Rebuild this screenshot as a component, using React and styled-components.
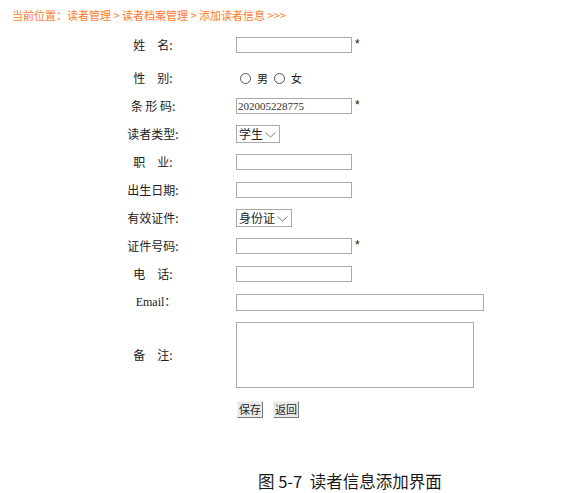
import React from "react";
import styled, { createGlobalStyle } from "styled-components";

const GlobalStyle = createGlobalStyle`
  html, body {
    margin: 0;
    padding: 0;
    background: #fff;
  }
  body {
    font-family: "Noto Sans CJK SC", "Noto Sans", sans-serif;
    color: #222;
  }
`;

const Chevron = () => (
  <svg width="11" height="6" viewBox="0 0 11 6">
    <polyline points="0.5,0.5 5.5,5 10.5,0.5" fill="none" stroke="#777" strokeWidth="1" />
  </svg>
);

const App = () => {
  return (
    <S.Page>
      <GlobalStyle />
      <S.Breadcrumb>当前位置：读者管理 &gt; 读者档案管理 &gt; 添加读者信息 &gt;&gt;&gt;</S.Breadcrumb>
      <S.Form>
        <S.Row $h={28}>
          <S.Label>姓　名:</S.Label>
          <S.Field>
            <S.TextInput $w={116} />
            <S.Star>*</S.Star>
          </S.Field>
        </S.Row>
        <S.Row $h={28} $gap={5}>
          <S.Label>性　别:</S.Label>
          <S.Field>
            <S.Radios>
              <S.Radio />
              <S.RadioText>男</S.RadioText>
              <S.Radio />
              <S.RadioText>女</S.RadioText>
            </S.Radios>
          </S.Field>
        </S.Row>
        <S.Row $h={28}>
          <S.Label>条 形 码:</S.Label>
          <S.Field>
            <S.TextInput $w={116} defaultValue="202005228775" />
            <S.Star>*</S.Star>
          </S.Field>
        </S.Row>
        <S.Row $h={28}>
          <S.Label>读者类型:</S.Label>
          <S.Field>
            <S.SelectWrap>
              <S.Select $w={44} defaultValue="学生">
                <option>学生</option>
                <option>教师</option>
              </S.Select>
              <S.Arrow>
                <Chevron />
              </S.Arrow>
            </S.SelectWrap>
          </S.Field>
        </S.Row>
        <S.Row $h={28}>
          <S.Label>职　业:</S.Label>
          <S.Field>
            <S.TextInput $w={116} />
          </S.Field>
        </S.Row>
        <S.Row $h={28}>
          <S.Label>出生日期:</S.Label>
          <S.Field>
            <S.TextInput $w={116} />
          </S.Field>
        </S.Row>
        <S.Row $h={28}>
          <S.Label>有效证件:</S.Label>
          <S.Field>
            <S.SelectWrap>
              <S.Select $w={56} defaultValue="身份证">
                <option>身份证</option>
                <option>学生证</option>
              </S.Select>
              <S.Arrow>
                <Chevron />
              </S.Arrow>
            </S.SelectWrap>
          </S.Field>
        </S.Row>
        <S.Row $h={28}>
          <S.Label>证件号码:</S.Label>
          <S.Field>
            <S.TextInput $w={116} />
            <S.Star>*</S.Star>
          </S.Field>
        </S.Row>
        <S.Row $h={28}>
          <S.Label>电　话:</S.Label>
          <S.Field>
            <S.TextInput $w={116} />
          </S.Field>
        </S.Row>
        <S.Row $h={28}>
          <S.Label $serif>Email：</S.Label>
          <S.Field>
            <S.TextInput $w={248} $h={17} />
          </S.Field>
        </S.Row>
        <S.Row $h={78}>
          <S.Label>备　注:</S.Label>
          <S.Field>
            <S.TextArea />
          </S.Field>
        </S.Row>
        <S.Row $h={30}>
          <span />
          <S.Buttons>
            <S.Btn>保存</S.Btn>
            <S.Btn>返回</S.Btn>
          </S.Buttons>
        </S.Row>
      </S.Form>
      <S.Caption>图 5-7&nbsp; 读者信息添加界面</S.Caption>
    </S.Page>
  );
};

export default App;

const S = {
  Page: styled.div`
    width: 566px;
    height: 493px;
    overflow: hidden;
  `,
  Breadcrumb: styled.div`
    padding: 9px 12px 0;
    font-size: 11px;
    line-height: 13px;
    color: #ff7a2e;
    white-space: nowrap;
  `,
  Form: styled.div`
    margin-top: 9px;
    padding-left: 110px;
  `,
  Row: styled.div`
    display: grid;
    grid-template-columns: 86px 1fr;
    column-gap: 40px;
    align-items: center;
    height: ${(p) => p.$h}px;
    margin-top: ${(p) => p.$gap || 0}px;
  `,
  Label: styled.div`
    text-align: center;
    font-size: 12px;
    line-height: 14px;
    color: #222;
    white-space: nowrap;
    padding-left: ${(p) => (p.$serif ? 6 : 0)}px;
    font-family: ${(p) =>
      p.$serif
        ? '"Liberation Serif", "Noto Sans CJK SC", serif'
        : '"Noto Sans CJK SC", sans-serif'};
  `,
  Field: styled.div`
    display: flex;
    align-items: flex-start;
  `,
  TextInput: styled.input`
    box-sizing: border-box;
    width: ${(p) => p.$w}px;
    height: ${(p) => p.$h || 16}px;
    margin: 0;
    padding: 0 1px;
    border: 1px solid #a9a9a9;
    background: #fff;
    font-family: "Liberation Serif", serif;
    font-size: 11px;
    color: #333;
    outline: none;
  `,
  Star: styled.span`
    margin-left: 3px;
    margin-top: 2px;
    font-size: 12px;
    line-height: 10px;
    color: #111;
    font-family: "Liberation Sans", sans-serif;
  `,
  Radios: styled.div`
    display: flex;
    align-items: center;
    padding-left: 4px;
  `,
  Radio: styled.span`
    box-sizing: border-box;
    width: 11px;
    height: 11px;
    border: 1px solid #555;
    border-radius: 50%;
    margin-right: 6px;
  `,
  RadioText: styled.span`
    font-size: 11px;
    line-height: 14px;
    margin-right: 6px;
    color: #222;
  `,
  SelectWrap: styled.div`
    position: relative;
    display: flex;
  `,
  Select: styled.select`
    box-sizing: border-box;
    appearance: none;
    -webkit-appearance: none;
    width: ${(p) => p.$w}px;
    height: 18px;
    margin: 0;
    padding: 0 0 0 2px;
    border: 1px solid #a9a9a9;
    border-radius: 0;
    background: #fff;
    font-family: "Noto Sans CJK SC", sans-serif;
    font-size: 12px;
    line-height: 16px;
    color: #222;
    outline: none;
  `,
  Arrow: styled.span`
    position: absolute;
    right: 4px;
    top: 7px;
    display: flex;
    pointer-events: none;
  `,
  TextArea: styled.textarea`
    box-sizing: border-box;
    width: 238px;
    height: 66px;
    margin: 0;
    padding: 2px;
    border: 1px solid #a9a9a9;
    resize: none;
    outline: none;
  `,
  Buttons: styled.div`
    display: flex;
    gap: 10px;
    padding-left: 1px;
  `,
  Btn: styled.button`
    box-sizing: border-box;
    width: 26px;
    height: 17px;
    margin: 0;
    padding: 0;
    border: 1px solid;
    border-color: #f2f2f2 #7a7a7a #7a7a7a #f2f2f2;
    background: #e9e9e9;
    font-family: "Noto Sans CJK SC", sans-serif;
    font-size: 11px;
    line-height: 14px;
    color: #222;
  `,
  Caption: styled.div`
    margin-top: 47px;
    padding-left: 258px;
    font-size: 16.5px;
    line-height: 20px;
    color: #1a1a1a;
    white-space: nowrap;
  `,
};
